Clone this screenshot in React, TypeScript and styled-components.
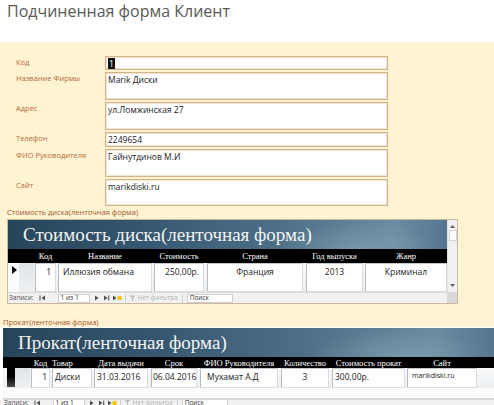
import React from "react";
import styled, { createGlobalStyle } from "styled-components";

const Global = createGlobalStyle`
  html, body { margin: 0; padding: 0; background: #fff; }
  body {
    font-family: "Open Sans", "Noto Sans", sans-serif;
    width: 494px;
    height: 405px;
    overflow: hidden;
  }
`;

const Page = styled.div`
  width: 494px;
  height: 405px;
  overflow: hidden;
  display: flex;
  flex-direction: column;
`;

const Title = styled.div`
  height: 42px;
  box-sizing: border-box;
  padding: 1px 0 0 7px;
  font-size: 16px;
  line-height: 20px;
  color: #595959;
  flex-shrink: 0;
`;

const Panel = styled.div`
  background: #fff3d1;
  height: 285px;
  flex-shrink: 0;
  box-sizing: border-box;
  padding-top: 14px;
  display: flex;
  flex-direction: column;
`;

const Form = styled.div`
  display: grid;
  grid-template-columns: 89px 283px;
  row-gap: 2px;
  padding-left: 16px;
`;

const Label = styled.div`
  font-size: 7.5px;
  line-height: 10px;
  padding-top: 1px;
  color: #b56a3c;
`;

const Field = styled.div<{ $h: number }>`
  height: ${p => p.$h}px;
  box-sizing: border-box;
  background: #fff;
  border: 1px solid #d2b38b;
  box-shadow: inset 0 0 0 1px #f1e4d0;
  padding: 1px 0 0 2px;
  font-size: 8.5px;
  line-height: 11px;
  color: #1a1a1a;
`;

const Selected = styled.span`
  background: #111;
  color: #fff;
  padding: 0 1px;
`;

const SubLabel = styled.div<{ $ml: number; $mt: number }>`
  margin: ${p => p.$mt}px 0 0 ${p => p.$ml}px;
  font-size: 7.5px;
  line-height: 9px;
  color: #a4552e;
`;

const SubBox = styled.div`
  margin: 2px 0 0 7px;
  width: 451px;
  box-sizing: border-box;
  border: 1px solid #c9b99f;
  display: grid;
  grid-template-columns: 439px 10px;
  grid-template-rows: auto 11px;
  background: #fff;
`;

const Content = styled.div`
  display: flex;
  flex-direction: column;
  min-width: 0;
  overflow: hidden;
`;

const Banner = styled.div<{ $pl: number }>`
  height: 29px;
  flex-shrink: 0;
  box-sizing: border-box;
  padding-left: ${p => p.$pl}px;
  display: flex;
  align-items: center;
  font-family: "Liberation Serif", "Times New Roman", serif;
  font-size: 19px;
  color: #f3f3f3;
  white-space: nowrap;
  background:
    radial-gradient(ellipse 26% 130% at 80% 100%, rgba(160, 188, 205, 0.35), rgba(160, 188, 205, 0) 70%),
    linear-gradient(90deg, #27455a 0%, #355670 30%, #4d7087 62%, #6b8ca1 88%, #557690 100%);
`;

const HeadRow = styled.div<{ $h: number; $pl: number }>`
  height: ${p => p.$h}px;
  flex-shrink: 0;
  background: #000;
  display: flex;
  align-items: center;
  padding-left: ${p => p.$pl}px;
  font-family: "Liberation Serif", "Times New Roman", serif;
  font-size: 8.5px;
  color: #fff;
  white-space: nowrap;
`;

const HeadCell = styled.div<{ $w: number; $ml: number; $align: string }>`
  width: ${p => p.$w}px;
  margin-left: ${p => p.$ml}px;
  flex-shrink: 0;
  text-align: ${p => p.$align};
  overflow: visible;
`;

const DataRow = styled.div<{ $h: number; $pl: number }>`
  height: ${p => p.$h}px;
  flex-shrink: 0;
  display: flex;
  align-items: flex-start;
  padding-left: ${p => p.$pl}px;
  background: linear-gradient(180deg, #f7f8f9, #eceff1);
`;

const Selector = styled.div<{ $h: number }>`
  width: 11px;
  height: ${p => p.$h}px;
  flex-shrink: 0;
  background: #fbfbfb;
  display: flex;
  padding: 3px 0 0 4px;
  box-sizing: border-box;
`;

const SelectorBlack = styled.div`
  width: 8px;
  height: 19px;
  flex-shrink: 0;
  background: linear-gradient(180deg, #000 0%, #000 45%, #4a4a4a 100%);
`;

const Gutter = styled.div<{ $w: number; $h: number }>`
  width: ${p => p.$w}px;
  height: ${p => p.$h}px;
  flex-shrink: 0;
  background: linear-gradient(180deg, #dfe4e8, #eef1f3);
`;

const Cell = styled.div<{ $w: number; $ml: number; $h: number; $align: string; $pad: number; $small?: boolean }>`
  width: ${p => p.$w}px;
  margin-left: ${p => p.$ml}px;
  height: ${p => p.$h}px;
  flex-shrink: 0;
  box-sizing: border-box;
  background: #fff;
  border: 1px solid #d9dde1;
  border-left-color: #b6bbc0;
  border-top-color: #c4c8cc;
  text-align: ${p => p.$align};
  padding: ${p => (p.$small ? 1 : 2)}px ${p => p.$pad}px 0 ${p => p.$pad}px;
  font-size: ${p => (p.$small ? "7px" : "8.5px")};
  line-height: 11px;
  color: #1a1a1a;
  white-space: nowrap;
  overflow: visible;
`;

const Scroll = styled.div`
  background: #f0f0f0;
  border-left: 1px solid #e2e2e2;
  display: flex;
  flex-direction: column;
  align-items: center;
`;

const ScrollBtn = styled.div<{ $mt: number }>`
  width: 8px;
  height: 8px;
  margin-top: ${p => p.$mt}px;
  display: flex;
  align-items: center;
  justify-content: center;
`;

const Thumb = styled.div`
  width: 8px;
  height: 11px;
  background: #fafafa;
  border: 1px solid #d3d3d3;
  box-sizing: border-box;
`;

const Corner = styled.div`
  background: #d8d8d8;
`;

const Nav = styled.div`
  height: 11px;
  box-sizing: border-box;
  display: flex;
  align-items: center;
  background: #f1f1f1;
  border-top: 1px solid #dadada;
  font-size: 6.5px;
  line-height: 8px;
  color: #505050;
  white-space: nowrap;
  overflow: hidden;
`;

const NavItem = styled.div<{ $ml: number; $muted?: boolean }>`
  margin-left: ${p => p.$ml}px;
  flex-shrink: 0;
  display: flex;
  align-items: center;
  color: ${p => (p.$muted ? "#b4b4b4" : "#505050")};
`;

const NavBox = styled.div<{ $ml: number; $w: number }>`
  margin-left: ${p => p.$ml}px;
  width: ${p => p.$w}px;
  height: 9px;
  flex-shrink: 0;
  box-sizing: border-box;
  background: #fff;
  border: 1px solid #cfcfcf;
  padding-left: 2px;
  display: flex;
  align-items: center;
  color: #303030;
`;

const NavSep = styled.div<{ $ml: number }>`
  margin-left: ${p => p.$ml}px;
  width: 1px;
  height: 9px;
  background: #d0d0d0;
  flex-shrink: 0;
`;

const Sub2 = styled.div`
  margin: 1px 0 0 3px;
  width: 491px;
  display: flex;
  flex-direction: column;
  overflow: hidden;
  background: #fff;
`;

const Sub2Body = styled.div`
  height: 30px;
  flex-shrink: 0;
  display: flex;
  flex-direction: column;
  background: #fbfbfc;
  border-bottom: 1px solid #d4d4d4;
`;

type Col = {
  title: string;
  value: string;
  w: number;
  ml: number;
  align: string;
  pad: number;
  head?: string;
  small?: boolean;
};

const cols1: Col[] = [
  { title: "Код", value: "1", w: 21, ml: 1, align: "right", pad: 4 },
  { title: "Название", value: "Иллюзия обмана", w: 94, ml: 2, align: "left", pad: 4 },
  { title: "Стоимость", value: "250,00р.", w: 50, ml: 2, align: "right", pad: 4 },
  { title: "Страна", value: "Франция", w: 96, ml: 3, align: "center", pad: 4 },
  { title: "Год выпуска", value: "2013", w: 57, ml: 3, align: "center", pad: 4 },
  { title: "Жанр", value: "Криминал", w: 82, ml: 2, align: "center", pad: 4 },
];

const cols2: Col[] = [
  { title: "Код", value: "1", w: 19, ml: 1, align: "right", pad: 2 },
  { title: "Товар", value: "Диски", w: 40, ml: 2, align: "left", pad: 2, head: "left" },
  { title: "Дата выдачи", value: "31.03.2016", w: 54, ml: 2, align: "left", pad: 2 },
  { title: "Срок", value: "06.04.2016", w: 46, ml: 3, align: "left", pad: 1 },
  { title: "ФИО Руководителя", value: "Мухамат А.Д", w: 78, ml: 3, align: "left", pad: 6 },
  { title: "Количество", value: "3", w: 48, ml: 3, align: "center", pad: 2 },
  { title: "Стоимость прокат", value: "300,00р.", w: 73, ml: 3, align: "left", pad: 2 },
  { title: "Сайт", value: "marikdiski.ru", w: 70, ml: 2, align: "left", pad: 4, small: true },
];

const fields = [
  { label: "Код", h: 14, value: "1", sel: true },
  { label: "Название Фирмы", h: 28, value: "Marik Диски" },
  { label: "Адрес", h: 28, value: "ул.Ломжинская 27" },
  { label: "Телефон", h: 15, value: "2249654" },
  { label: "ФИО Руководителя", h: 28, value: "Гайнутдинов М.И" },
  { label: "Сайт", h: 27, value: "marikdiski.ru" },
];

const Tri = ({ dir, bar, star }: { dir: "l" | "r"; bar?: boolean; star?: boolean }) => (
  <svg width={star ? 10 : 7} height="6" viewBox={star ? "0 0 10 6" : "0 0 7 6"}>
    {dir === "l" ? (
      <>
        {bar && <rect x="0.5" y="0.5" width="1" height="5" fill="#505050" />}
        <path d="M6 0.5 L2.5 3 L6 5.5 Z" fill="#505050" />
      </>
    ) : (
      <>
        <path d="M1 0.5 L4.5 3 L1 5.5 Z" fill="#505050" />
        {bar && <rect x="5.2" y="0.5" width="1" height="5" fill="#505050" />}
        {star && <rect x="5.5" y="1" width="4" height="4" fill="#f2c200" />}
      </>
    )}
  </svg>
);

const Funnel = () => (
  <svg width="7" height="7" viewBox="0 0 7 7">
    <path d="M0.5 0.5 H6.5 L4 3.5 V6.5 L3 6 V3.5 Z" fill="#bcbcbc" />
  </svg>
);

const Arrow = ({ up }: { up?: boolean }) => (
  <svg width="5" height="3" viewBox="0 0 5 3">
    <path d={up ? "M0 3 L2.5 0 L5 3 Z" : "M0 0 L2.5 3 L5 0 Z"} fill="#606060" />
  </svg>
);

const NavBar = () => (
  <Nav>
    <NavItem $ml={1}>Записи:</NavItem>
    <NavItem $ml={5}>
      <Tri dir="l" bar />
    </NavItem>
    <NavBox $ml={12} $w={32}>1 из 1</NavBox>
    <NavItem $ml={4}>
      <Tri dir="r" />
    </NavItem>
    <NavItem $ml={2}>
      <Tri dir="r" bar />
    </NavItem>
    <NavItem $ml={2}>
      <Tri dir="r" star />
    </NavItem>
    <NavSep $ml={3} />
    <NavItem $ml={3}>
      <Funnel />
    </NavItem>
    <NavItem $ml={2} $muted>
      Нет фильтра
    </NavItem>
    <NavSep $ml={4} />
    <NavBox $ml={4} $w={46}>Поиск</NavBox>
  </Nav>
);

export default function App() {
  return (
    <Page>
      <Global />
      <Title>Подчиненная форма Клиент</Title>
      <Panel>
        <Form>
          {fields.map(f => (
            <React.Fragment key={f.label}>
              <Label>{f.label}</Label>
              <Field $h={f.h}>{f.sel ? <Selected>{f.value}</Selected> : f.value}</Field>
            </React.Fragment>
          ))}
        </Form>
        <SubLabel $ml={7} $mt={2}>Стоимость диска(ленточная форма)</SubLabel>
        <SubBox>
          <Content>
            <Banner $pl={15}>Стоимость диска(ленточная форма)</Banner>
            <HeadRow $h={14} $pl={26}>
              {cols1.map(c => (
                <HeadCell key={c.title} $w={c.w} $ml={c.ml} $align="center">
                  {c.title}
                </HeadCell>
              ))}
            </HeadRow>
            <DataRow $h={29} $pl={0}>
              <Selector $h={29}>
                <svg width="5" height="8" viewBox="0 0 5 8">
                  <path d="M0 0 L5 4 L0 8 Z" fill="#000" />
                </svg>
              </Selector>
              <Gutter $w={15} $h={29} />
              {cols1.map(c => (
                <Cell key={c.title} $w={c.w} $ml={c.ml} $h={29} $align={c.align} $pad={c.pad}>
                  {c.value}
                </Cell>
              ))}
            </DataRow>
          </Content>
          <Scroll>
            <ScrollBtn $mt={2}>
              <Arrow up />
            </ScrollBtn>
            <Thumb />
            <ScrollBtn $mt={40}>
              <Arrow />
            </ScrollBtn>
          </Scroll>
          <NavBar />
          <Corner />
        </SubBox>
        <SubLabel $ml={3} $mt={14}>Прокат(ленточная форма)</SubLabel>
      </Panel>
      <Sub2>
        <Banner $pl={15}>Прокат(ленточная форма)</Banner>
        <HeadRow $h={11} $pl={27}>
          {cols2.map(c => (
            <HeadCell key={c.title} $w={c.w} $ml={c.ml} $align={c.head || "center"}>
              {c.title}
            </HeadCell>
          ))}
        </HeadRow>
        <Sub2Body>
          <DataRow $h={20} $pl={4}>
            <SelectorBlack />
            <Gutter $w={15} $h={20} />
            {cols2.map(c => (
              <Cell key={c.title} $w={c.w} $ml={c.ml} $h={20} $align={c.align} $pad={c.pad} $small={c.small}>
                {c.value}
              </Cell>
            ))}
          </DataRow>
        </Sub2Body>
        <NavBar />
      </Sub2>
    </Page>
  );
}
